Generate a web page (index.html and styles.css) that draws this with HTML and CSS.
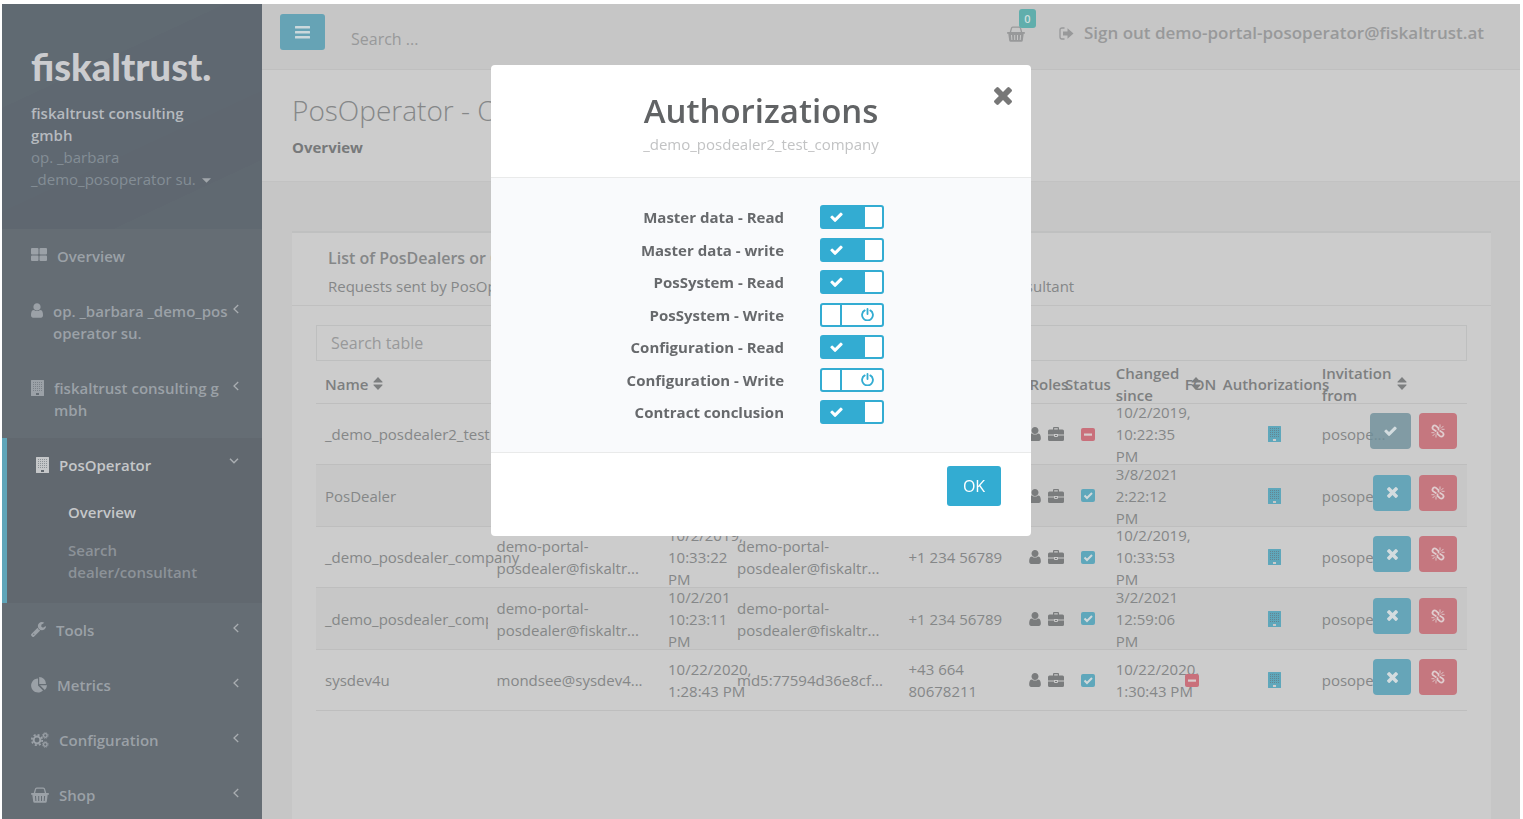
FILE: index.html
```html
<!DOCTYPE html>
<html lang="en">
<head>
<meta charset="utf-8">
<title>PosOperator - Overview</title>
<link rel="stylesheet" href="styles.css">
</head>
<body>
<svg class="sprite" aria-hidden="true">
  <symbol id="i-grid" viewBox="0 0 16 14"><path d="M1 0h5.500q1 0 1 1v4.500q0 1-1 1H1q-1 0-1-1V1q0-1 1-1zM9.500 0H15q1 0 1 1v4.500q0 1-1 1H9.500q-1 0-1-1V1q0-1 1-1zM1 7.500h5.500q1 0 1 1V12q0 1-1 1H1q-1 0-1-1V8.500q0-1 1-1zM9.500 7.500H15q1 0 1 1V12q0 1-1 1H9.500q-1 0-1-1V8.500q0-1 1-1z"/></symbol>
  <symbol id="i-user" viewBox="256 128 1280 1536"><path d="M1536 1399q0 109-62.500 187t-150.500 78h-854q-88 0-150.500-78t-62.500-187q0-85 8.500-160.500t31.500-152 58.500-131 94-89 134.500-34.500q131 128 313 128t313-128q76 0 134.500 34.500t94 89 58.500 131 31.500 152 8.500 160.500zm-256-887q0 159-112.500 271.500t-271.500 112.500-271.500-112.500-112.500-271.500 112.500-271.500 271.500-112.500 271.500 112.500 112.500 271.500z"/></symbol>
  <symbol id="i-building" viewBox="0 0 13 16"><path fill-rule="evenodd" d="M.5 0h12q.5 0 .5.500v15q0 .500-.5.500H.5q-.5 0-.5-.500V.5Q0 0 .5 0zM5 13v2h3v-2z"/><path class="windows" d="M2 2.500h9M2 4.500h9M2 6.500h9M2 8.500h9M2 10.500h9" stroke-dasharray="1 1"/></symbol>
  <symbol id="i-wrench" viewBox="85 128 1641 1643"><path d="M448 1472q0-26-19-45t-45-19-45 19-19 45 19 45 45 19 45-19 19-45zm644-420l-682 682q-37 37-90 37-52 0-91-37l-106-108q-38-36-38-90 0-53 38-91l681-681q39 98 114.500 173.500t173.500 114.500zm634-435q0 39-23 106-47 134-164.500 217.500t-258.500 83.500q-185 0-316.500-131.500t-131.500-316.500 131.500-316.500 316.500-131.500q58 0 121.500 16.500t107.500 46.500q16 11 16 28t-16 28l-293 169v224l193 107q5-3 79-48.500t135.500-81 70.500-35.500q15 0 23.500 10t8.500 25z"/></symbol>
  <symbol id="i-pie" viewBox="0 0 16 16"><path d="M7 1.500v7l5 5A7 7 0 1 1 7 1.500zM8.200 0a7 7 0 0 1 6.800 7H8.200zM9 8.200h7a7 7 0 0 1-2.200 4.800z"/></symbol>
  <symbol id="i-cogs" viewBox="0 0 18 16"><g fill="none" stroke="currentColor"><circle cx="6" cy="8" r="3.400" stroke-width="2"/><circle cx="6" cy="8" r="5.200" stroke-width="1.800" stroke-dasharray="2.040 2.040"/><circle cx="14.300" cy="3.500" r="1.800" stroke-width="1.300"/><circle cx="14.300" cy="3.500" r="2.800" stroke-width="1" stroke-dasharray="1.100 1.100"/><circle cx="14.300" cy="12.500" r="1.800" stroke-width="1.300"/><circle cx="14.300" cy="12.500" r="2.800" stroke-width="1" stroke-dasharray="1.100 1.100"/></g></symbol>
  <symbol id="i-basket" viewBox="0 0 18 16"><path fill="none" stroke="currentColor" stroke-width="1.300" d="M3.200 7l1.300-4.800q.2-1 1.200-1h6.600q1 0 1.200 1L14.800 7M6.500 1.200h5"/><path fill-rule="evenodd" d="M.8 6h16.400q.8 0 .8.900t-.8.900h-.500L15.800 14.500q-.2 1.300-1.400 1.300H3.600q-1.200 0-1.400-1.300L1.300 7.800H.8Q0 7.800 0 6.900T.8 6zM4 9l.4 5h1L5 9zm3.200 0v5h1V9zm2.800 0v5h1V9zm3.100 0l-.4 5h1l.4-5z"/></symbol>
  <symbol id="i-signout" viewBox="0 0 15 13"><path fill="none" stroke="currentColor" stroke-width="1.300" d="M5.500 1H3Q1 1 1 3v7q0 2 2 2h2.500"/><path d="M4 4.500h4.500V1.200L14.500 6.500 8.500 11.800V8.500H4z"/></symbol>
  <symbol id="i-bars" viewBox="0 0 15 13"><path d="M.5 0h14q.5 0 .5.500v1.500q0 .500-.5.500H.5Q0 2.500 0 2V.5Q0 0 .5 0zM.5 5h14q.5 0 .5.500V7q0 .500-.5.500H.5Q0 7.500 0 7V5.500Q0 5 .5 5zM.5 10h14q.5 0 .5.500V12q0 .500-.5.500H.5Q0 12.500 0 12v-1.500Q0 10 .5 10z"/></symbol>
  <symbol id="i-left" viewBox="0 0 6 10"><path fill="none" stroke="currentColor" stroke-width="1.300" d="M5.200 1L1 5l4.200 4"/></symbol>
  <symbol id="i-down" viewBox="0 0 10 6"><path fill="none" stroke="currentColor" stroke-width="1.500" d="M1 .8L5 4.800 9 .8"/></symbol>
  <symbol id="i-caret" viewBox="0 0 10 5"><path d="M0 0h10L5 5z"/></symbol>
  <symbol id="i-sort" viewBox="0 0 10 13"><path d="M5 0l4.500 4.800q.4.700-.4.700H.9q-.8 0-.4-.700zM5 13L.5 8.200q-.4-.700.4-.700h8.200q.8 0 .4.700z"/></symbol>
  <symbol id="i-briefcase" viewBox="0 0 16 14"><path fill-rule="evenodd" d="M5 2.500V1q0-1 1-1h4q1 0 1 1v1.500h3.500Q16 2.500 16 4v3.500h-6V7H6v.500H0V4q0-1.500 1.500-1.500zm1.200 0h3.600V1.200H6.200zM0 8.500h6V9q0 1 1 1h2q1 0 1-1v-.500h6v4q0 1.500-1.500 1.500h-13Q0 14 0 12.500zM7 8h2v1H7z"/></symbol>
  <symbol id="i-check" viewBox="120 270 1551 1252"><path d="M1671 566q0 40-28 68l-724 724-136 136q-28 28-68 28t-68-28l-136-136-362-362q-28-28-28-68t28-68l136-136q28-28 68-28t68 28l294 295 656-657q28-28 68-28t68 28l136 136q28 28 28 68z"/></symbol>
  <symbol id="i-times" viewBox="302 366 1188 1188"><path d="M1490 1322q0 40-28 68l-136 136q-28 28-68 28t-68-28l-294-294-294 294q-28 28-68 28t-68-28l-136-136q-28-28-28-68t28-68l294-294-294-294q-28-28-28-68t28-68l136-136q28-28 68-28t68 28l294 294 294-294q28-28 68-28t68 28l136 136q28 28 28 68t-28 68l-294 294 294 294q28 28 28 68z"/></symbol>
  <symbol id="i-unlink" viewBox="0 0 14 14"><g fill="none" stroke="currentColor" stroke-linecap="round"><path stroke-width="1.800" d="M4.800 7L2.300 5.400Q.800 4 1.900 2.400 3.400.7 5 1.900L7.500 4.200V5.500M9.200 7l2.500 1.600q1.500 1.400.4 3-1.500 1.700-3.100.5L6.500 9.800V8.500"/><path stroke-width=".9" d="M3.800 9.800l-2 2M5 10.800v2.400M3 8.700H.8M10.200 4.200l2-2M9 3.200V.8M11 5.300h2.200"/></g></symbol>
  <symbol id="i-on" viewBox="0 0 14 13"><rect width="14" height="13" rx="2"/><path fill="none" stroke="#d0d8da" stroke-width="2" d="M3.500 6.500L6 9l5-5"/></symbol>
  <symbol id="i-off" viewBox="0 0 14 13"><rect width="14" height="13" rx="2"/><path fill="#d8cccd" d="M3 5.500h8v2.200H3z"/></symbol>
  <symbol id="i-power" viewBox="0 0 12 12"><path fill="none" stroke="currentColor" stroke-width="1.700" stroke-linecap="round" d="M3.400 2.200a5 5 0 1 0 5.200 0M6 .9v4.600"/></symbol>
</svg>

<div class="app">
  <aside class="sidebar">
    <div class="profile">
      <a class="logo" href="#">fiskaltrust.</a>
      <a class="account" href="#"><strong>fiskaltrust consulting gmbh</strong><span>op. _barbara _demo_posoperator su. <svg width="9" height="5"><use href="#i-caret"/></svg></span></a>
    </div>
    <nav>
      <ul class="menu">
        <li><a href="#"><svg width="16" height="14"><use href="#i-grid"/></svg><span>Overview</span></a></li>
        <li><a href="#"><svg width="12" height="15"><use href="#i-user"/></svg><span>op. _barbara _demo_posoperator su.</span><svg class="chev" width="6" height="10"><use href="#i-left"/></svg></a></li>
        <li><a href="#"><svg width="13" height="16"><use href="#i-building"/></svg><span>fiskaltrust consulting gmbh</span><svg class="chev" width="6" height="10"><use href="#i-left"/></svg></a></li>
        <li class="active"><a href="#"><svg width="13" height="16"><use href="#i-building"/></svg><span>PosOperator</span><svg class="chev" width="10" height="6"><use href="#i-down"/></svg></a>
          <ul class="submenu">
            <li><a class="current" href="#">Overview</a></li>
            <li><a href="#">Search dealer/consultant</a></li>
          </ul>
        </li>
        <li><a href="#"><svg width="15" height="15"><use href="#i-wrench"/></svg><span>Tools</span><svg class="chev" width="6" height="10"><use href="#i-left"/></svg></a></li>
        <li><a href="#"><svg width="16" height="16"><use href="#i-pie"/></svg><span>Metrics</span><svg class="chev" width="6" height="10"><use href="#i-left"/></svg></a></li>
        <li><a href="#"><svg width="18" height="16"><use href="#i-cogs"/></svg><span>Configuration</span><svg class="chev" width="6" height="10"><use href="#i-left"/></svg></a></li>
        <li><a href="#"><svg width="18" height="16"><use href="#i-basket"/></svg><span>Shop</span><svg class="chev" width="6" height="10"><use href="#i-left"/></svg></a></li>
      </ul>
    </nav>
  </aside>

  <main class="main">
    <header class="topbar">
      <button class="toggle-menu" type="button" aria-label="Toggle menu"><svg width="15" height="13"><use href="#i-bars"/></svg></button>
      <input class="top-search" type="text" placeholder="Search ..." aria-label="Search">
      <a class="cart" href="#" aria-label="Cart"><svg width="18" height="16"><use href="#i-basket"/></svg><span class="badge">0</span></a>
      <a class="signout" href="#"><svg width="15" height="13"><use href="#i-signout"/></svg><span>Sign out demo-portal-posoperator@fiskaltrust.at</span></a>
    </header>
    <section class="page-head">
      <h1>PosOperator - Overview</h1>
      <strong>Overview</strong>
    </section>
    <section class="panel">
      <div class="panel-head">
        <h2>List of PosDealers or Consultants</h2>
        <p>Requests sent by PosOperator to a dealer and requests which have been sent by a PosDealer or consultant</p>
      </div>
      <div class="panel-body">
        <input class="table-search" type="text" placeholder="Search table" aria-label="Search table">
        <table>
          <colgroup><col class="c-name"><col class="c-mail"><col class="c-date"><col class="c-mail"><col class="c-phone"><col class="c-roles"><col class="c-status"><col class="c-date"><col class="c-fon"><col class="c-auth"><col class="c-from"><col class="c-act"></colgroup>
          <thead>
            <tr>
              <th><div>Name <svg width="10" height="13"><use href="#i-sort"/></svg></div></th>
              <th><div>E-mail</div></th><th><div>Since</div></th><th><div>Contact</div></th><th><div>Phone</div></th>
              <th><div>Roles</div></th><th><div>Status</div></th>
              <th><div><span class="two">Changed since</span><svg width="10" height="13"><use href="#i-sort"/></svg></div></th>
              <th><div>FON</div></th><th><div>Authorizations</div></th>
              <th><div><span class="two">Invitation from</span> <svg width="10" height="13"><use href="#i-sort"/></svg></div></th>
              <th></th>
            </tr>
          </thead>
          <tbody>
            <tr>
              <td><div>_demo_posdealer2_test</div></td><td><div></div></td><td><div></div></td><td><div></div></td><td><div></div></td>
              <td><div class="roles"><svg width="12" height="14"><use href="#i-user"/></svg><svg width="16" height="14"><use href="#i-briefcase"/></svg></div></td>
              <td><div class="state"><svg class="red" width="14" height="13"><use href="#i-off"/></svg></div></td>
              <td><div>10/2/2019, 10:22:35 PM</div></td><td></td>
              <td><div class="auth"><svg class="blue" width="13" height="16"><use href="#i-building"/></svg></div></td>
              <td><div class="nowrap">posope...</div></td>
              <td><div class="actions"><button class="btn accept" type="button" aria-label="Accept"><svg width="13" height="10"><use href="#i-check"/></svg></button><button class="btn danger" type="button" aria-label="Unlink"><svg width="14" height="14"><use href="#i-unlink"/></svg></button></div></td>
            </tr>
            <tr>
              <td><div>PosDealer</div></td><td><div></div></td><td><div></div></td><td><div></div></td><td><div></div></td>
              <td><div class="roles"><svg width="12" height="14"><use href="#i-user"/></svg><svg width="16" height="14"><use href="#i-briefcase"/></svg></div></td>
              <td><div class="state"><svg class="blue" width="14" height="13"><use href="#i-on"/></svg></div></td>
              <td><div class="clip">3/8/2021, 2:22:12 PM</div></td><td></td>
              <td><div class="auth"><svg class="blue" width="13" height="16"><use href="#i-building"/></svg></div></td>
              <td><div class="nowrap">posope...</div></td>
              <td><div class="actions"><button class="btn" type="button" aria-label="Cancel"><svg width="11" height="11"><use href="#i-times"/></svg></button><button class="btn danger" type="button" aria-label="Unlink"><svg width="14" height="14"><use href="#i-unlink"/></svg></button></div></td>
            </tr>
            <tr>
              <td><div>_demo_posdealer_company</div></td><td><div>demo-portal-posdealer@fiskaltr...</div></td><td><div>10/2/2019, 10:33:22 PM</div></td><td><div>demo-portal-posdealer@fiskaltr...</div></td><td><div>+1 234 56789</div></td>
              <td><div class="roles"><svg width="12" height="14"><use href="#i-user"/></svg><svg width="16" height="14"><use href="#i-briefcase"/></svg></div></td>
              <td><div class="state"><svg class="blue" width="14" height="13"><use href="#i-on"/></svg></div></td>
              <td><div>10/2/2019, 10:33:53 PM</div></td><td></td>
              <td><div class="auth"><svg class="blue" width="13" height="16"><use href="#i-building"/></svg></div></td>
              <td><div class="nowrap">posope...</div></td>
              <td><div class="actions"><button class="btn" type="button" aria-label="Cancel"><svg width="11" height="11"><use href="#i-times"/></svg></button><button class="btn danger" type="button" aria-label="Unlink"><svg width="14" height="14"><use href="#i-unlink"/></svg></button></div></td>
            </tr>
            <tr>
              <td><div class="clip">_demo_posdealer_company</div></td><td><div>demo-portal-posdealer@fiskaltr...</div></td><td><div class="clip">10/2/2019, 10:23:11 PM</div></td><td><div>demo-portal-posdealer@fiskaltr...</div></td><td><div>+1 234 56789</div></td>
              <td><div class="roles"><svg width="12" height="14"><use href="#i-user"/></svg><svg width="16" height="14"><use href="#i-briefcase"/></svg></div></td>
              <td><div class="state"><svg class="blue" width="14" height="13"><use href="#i-on"/></svg></div></td>
              <td><div class="clip">3/2/2021, 12:59:06 PM</div></td><td></td>
              <td><div class="auth"><svg class="blue" width="13" height="16"><use href="#i-building"/></svg></div></td>
              <td><div class="nowrap">posope...</div></td>
              <td><div class="actions"><button class="btn" type="button" aria-label="Cancel"><svg width="11" height="11"><use href="#i-times"/></svg></button><button class="btn danger" type="button" aria-label="Unlink"><svg width="14" height="14"><use href="#i-unlink"/></svg></button></div></td>
            </tr>
            <tr>
              <td><div>sysdev4u</div></td><td><div>mondsee@sysdev4...</div></td><td><div><span class="lines">10/22/2020,<br>1:28:43 PM</span></div></td><td><div>md5:77594d36e8cf...</div></td><td><div>+43 664 80678211</div></td>
              <td><div class="roles"><svg width="12" height="14"><use href="#i-user"/></svg><svg width="16" height="14"><use href="#i-briefcase"/></svg></div></td>
              <td><div class="state"><svg class="blue" width="14" height="13"><use href="#i-on"/></svg></div></td>
              <td><div><span class="lines">10/22/2020,<br>1:30:43 PM</span></div></td>
              <td><div><svg class="red" width="14" height="13"><use href="#i-off"/></svg></div></td>
              <td><div class="auth"><svg class="blue" width="13" height="16"><use href="#i-building"/></svg></div></td>
              <td><div class="nowrap">posope...</div></td>
              <td><div class="actions"><button class="btn" type="button" aria-label="Cancel"><svg width="11" height="11"><use href="#i-times"/></svg></button><button class="btn danger" type="button" aria-label="Unlink"><svg width="14" height="14"><use href="#i-unlink"/></svg></button></div></td>
            </tr>
          </tbody>
        </table>
      </div>
    </section>
  </main>
</div>

<div class="overlay">
  <div class="modal" role="dialog" aria-modal="true" aria-labelledby="dlg-title">
    <header class="modal-head">
      <button class="close" type="button" aria-label="Close"><svg width="18" height="18"><use href="#i-times"/></svg></button>
      <h2 id="dlg-title">Authorizations</h2>
      <p>_demo_posdealer2_test_company</p>
    </header>
    <div class="modal-body">
      <div class="opt"><label for="o1">Master data - Read</label><span class="switch"><input id="o1" type="checkbox" checked><svg class="ok" width="13" height="10"><use href="#i-check"/></svg></span></div>
      <div class="opt"><label for="o2">Master data - write</label><span class="switch"><input id="o2" type="checkbox" checked><svg class="ok" width="13" height="10"><use href="#i-check"/></svg></span></div>
      <div class="opt"><label for="o3">PosSystem - Read</label><span class="switch"><input id="o3" type="checkbox" checked><svg class="ok" width="13" height="10"><use href="#i-check"/></svg></span></div>
      <div class="opt"><label for="o4">PosSystem - Write</label><span class="switch"><input id="o4" type="checkbox"><svg class="power" width="13" height="13"><use href="#i-power"/></svg></span></div>
      <div class="opt"><label for="o5">Configuration - Read</label><span class="switch"><input id="o5" type="checkbox" checked><svg class="ok" width="13" height="10"><use href="#i-check"/></svg></span></div>
      <div class="opt"><label for="o6">Configuration - Write</label><span class="switch"><input id="o6" type="checkbox"><svg class="power" width="13" height="13"><use href="#i-power"/></svg></span></div>
      <div class="opt"><label for="o7">Contract conclusion</label><span class="switch"><input id="o7" type="checkbox" checked><svg class="ok" width="13" height="10"><use href="#i-check"/></svg></span></div>
    </div>
    <footer class="modal-foot"><button class="primary" type="button">OK</button></footer>
  </div>
</div>
</body>
</html>
```
FILE: styles.css
```css
* { box-sizing: border-box; }
body {
  margin: 0;
  height: 100vh;
  overflow: hidden;
  background: #fff;
  color: #858788;
  font: 15px/22px "Open Sans", sans-serif;
}
h1, h2, p, ul { margin: 0; padding: 0; }
ul { list-style: none; }
a { color: inherit; text-decoration: none; }
button, input { font: inherit; color: inherit; margin: 0; }
svg { fill: currentColor; flex: none; }
.sprite { position: absolute; width: 0; height: 0; }
.windows { fill: none; stroke: #666e75; stroke-opacity: .6; }

.app { display: flex; height: 100vh; padding: 4px 3px 0 2px; }

/* Sidebar */
.sidebar { flex: none; width: 260px; background: #656d74; color: #9ba1a7; overflow: hidden; }
.profile {
  height: 225px;
  padding: 39px 28px 0 29px;
  background: linear-gradient(155deg, #606a72 0 30%, #5f6871 30% 60%, #5f6770 60% 80%, #606971 80%);
}
.logo { display: block; font: 900 38px/46px Lato, sans-serif; color: #cbcccf; }
.account { display: block; margin-top: 13px; width: 190px; color: #848e96; }
.account strong { display: block; font-weight: 600; color: #b6babf; }
.account svg { margin-left: 2px; vertical-align: middle; color: #a1a6ab; }
.menu > li > a { display: flex; align-items: flex-start; gap: 10px; padding: 16px 23px 17px 29px; font-weight: 600; }
.menu > li > a > svg { margin-top: 3px; }
.menu > li > a > span { flex: 1; word-break: break-all; }
.menu > li > a > .chev { margin: 4px 0 0 -10px; color: #a9adb1; }
.menu > .active { border-left: 5px solid #5fa5b9; background: #61686f; padding-bottom: 12px; }
.menu > .active > a { color: #c5c7c9; }
.submenu a { display: block; padding: 8px 40px 8px 61px; font-weight: 600; color: #8c9298; }
.submenu .current { color: #c5c7c9; }

/* Main area */
.main { flex: 1; min-width: 0; display: flex; flex-direction: column; background: #c6c6c6; }
.topbar { display: flex; align-items: flex-start; height: 66px; padding: 10px 36px 0 18px; border-bottom: 1px solid #bfbfbf; color: #98999a; }
.toggle-menu { display: grid; place-items: center; width: 45px; height: 36px; border: 0; border-radius: 3px; background: #66a3b5; color: #cbd8dc; }
.top-search { flex: 1; min-width: 0; margin: 14px 0 0 26px; padding: 0; border: 0; height: 22px; background: none; font-size: 16px; }
::placeholder { color: #98999a; opacity: 1; }
.cart { position: relative; margin: 12px 34px 0 0; }
.cart svg { display: block; }
.badge { position: absolute; left: 12px; top: -17px; width: 17px; height: 19px; border-radius: 3px; background: #60aeac; color: #cfdedd; font-size: 11px; font-weight: 600; line-height: 19px; text-align: center; }
.signout { display: flex; align-items: center; gap: 10px; margin-top: 8px; font-size: 17px; font-weight: 600; }
.page-head { height: 112px; padding: 19px 30px; background: #ccc; border-bottom: 1px solid #c2c2c2; }
.page-head h1 { font-weight: 300; font-size: 28px; line-height: 42px; }
.page-head strong { display: block; margin-top: 5px; color: #77797a; font-weight: 700; }

.panel { flex: 1; margin: 49px 29px 0 30px; background: #ccc; border-top: 2px solid #bfc0c0; }
.panel-head { padding: 14px 36px 8px; border-bottom: 1px solid #c0c0c0; }
.panel-head h2 { font-size: 16px; line-height: 22px; font-weight: 600; margin-bottom: 6px; }
.panel-head p { white-space: nowrap; }
.panel-body { padding: 19px 24px 0; }
.table-search { display: block; width: 100%; height: 36px; padding: 0 14px; border: 1px solid #bebfbf; background: none; font-size: 16px; }

table { width: 100%; table-layout: fixed; border-collapse: separate; border-spacing: 0; margin-top: 3px; }
.c-name, .c-mail { width: 14.9%; }
.c-date { width: 6%; }
.c-phone { width: 10.5%; }
.c-roles { width: 3.1%; }
.c-status { width: 4.4%; }
.c-fon { width: 3.3%; }
.c-auth { width: 8.6%; }
.c-from { width: 5%; }
.c-act { width: 8.4%; }
th, td { padding: 0; border-bottom: 1px solid #bebebe; text-align: left; vertical-align: middle; }
th { font-weight: 600; color: #7d7f80; }
th > div, td > div { display: flex; align-items: center; padding-left: 9px; height: 39px; }
th > div { white-space: nowrap; gap: 5px; }
th .two { white-space: normal; flex: none; width: 70px; }
td > div { height: 60px; }
tr:nth-child(even) td > div { height: 61px; }
tbody tr:nth-child(even) { background: #c7c7c7; }
td .clip { overflow-x: clip; }
.lines, .nowrap { white-space: nowrap; }
td > .roles { gap: 7px; color: #7a7c7d; }
td > .state { justify-content: center; padding-left: 14px; }
td > .auth { justify-content: center; padding-left: 22px; }
.blue { color: #5fa7bb; }
.red { color: #c9707b; }
.blue .windows { stroke: #ccc; }
td > .actions { justify-content: flex-end; gap: 8px; padding: 0 10px 6px 0; }
.btn { display: grid; place-items: center; flex: none; width: 38px; height: 36px; padding: 0; border: 0; border-radius: 4px; background: #66a5b8; color: #d3dcdf; }
.btn.accept { width: 41px; background: rgba(110, 143, 154, .8); }
.btn.danger { background: #c5777f; color: #e0cdcf; }

/* Dialog */
.overlay { position: fixed; inset: 0; display: flex; justify-content: center; align-items: flex-start; padding: 65px 1px 0 0; }
.modal { width: 540px; border-radius: 4px; background: #fff; color: #67696c; overflow: hidden; }
.modal-head { position: relative; padding: 24px 30px 22px; border-bottom: 1px solid #e9eaea; text-align: center; }
.modal-head h2 { font-size: 33px; line-height: 44px; font-weight: 600; color: #616365; }
.modal-head p { color: #c2c3c4; }
.close { position: absolute; top: 22px; right: 19px; padding: 0; border: 0; background: none; color: #777; height: 18px; display: flex; }
.modal-body { padding: 23px 0 24px; background: #f9fafc; border-bottom: 1px solid #e9eaea; }
.opt { display: grid; grid-template-columns: 293px 64px; column-gap: 36px; align-items: center; height: 32px; }
.opt:nth-child(even) { height: 33px; }
.opt label { text-align: right; font-weight: 700; }
.switch { position: relative; height: 24px; }
.switch input { appearance: none; display: block; width: 64px; height: 24px; border: 2px solid #33acd2; border-radius: 3px; background: linear-gradient(#33acd2, #33acd2) 18px 0 / 2px 100% no-repeat #fff; }
.switch input:checked { background: linear-gradient(#fff, #fff) 100% 0 / 17px 100% no-repeat #33acd2; }
.switch svg { position: absolute; pointer-events: none; }
.switch .ok { left: 10px; top: 7px; color: #fff; }
.switch .power { right: 10px; top: 5px; color: #33acd2; }
.modal-foot { display: flex; justify-content: flex-end; padding: 13px 30px 30px; }
.primary { width: 54px; height: 40px; border: 0; border-radius: 3px; background: #33acd2; color: #fff; font-size: 16px; }
```
